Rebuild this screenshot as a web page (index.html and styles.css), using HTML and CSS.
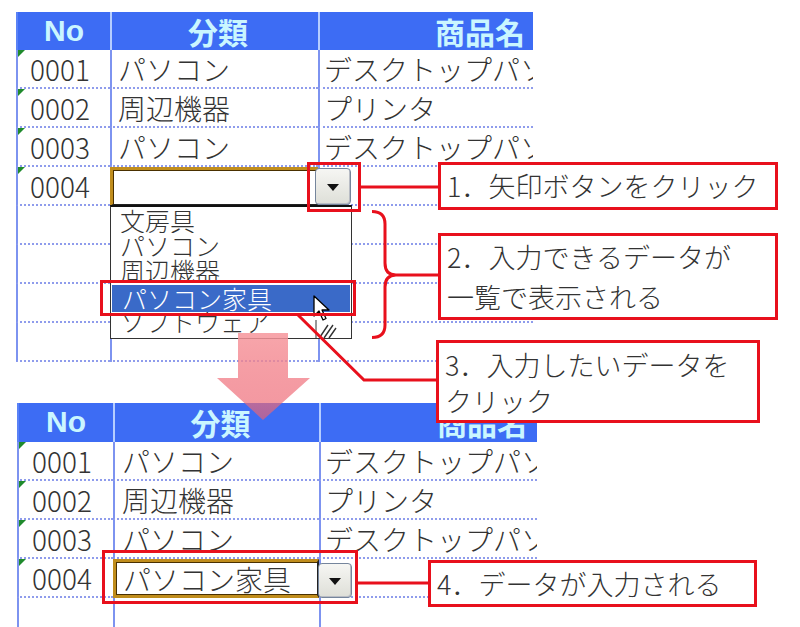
FILE: index.html
```html
<!DOCTYPE html>
<html lang="ja">
<head>
<meta charset="utf-8">
<link rel="stylesheet" href="styles.css">
</head>
<body>
<div class="canvas">
  <div class="sheet sheet-top">
    <div class="row head"><div class="c no">No</div><div class="c cat">分類</div><div class="c name">商品名</div></div>
    <div class="row"><div class="c no tri">0001</div><div class="c">パソコン</div><div class="c">デスクトップパソコン</div></div>
    <div class="row"><div class="c no tri">0002</div><div class="c">周辺機器</div><div class="c">プリンタ</div></div>
    <div class="row"><div class="c no tri">0003</div><div class="c">パソコン</div><div class="c">デスクトップパソコン</div></div>
    <div class="row"><div class="c no tri">0004</div><div class="c sel sel-open"></div><div class="c"></div></div>
    <div class="row"><div class="c no"></div><div class="c"></div><div class="c"></div></div>
    <div class="row"><div class="c no"></div><div class="c"></div><div class="c"></div></div>
    <div class="row"><div class="c no"></div><div class="c"></div><div class="c"></div></div>
    <div class="row"><div class="c no"></div><div class="c"></div><div class="c"></div></div>
  </div>

  <div class="sheet sheet-bottom">
    <div class="row head"><div class="c no">No</div><div class="c cat">分類</div><div class="c name">商品名</div></div>
    <div class="row"><div class="c no tri">0001</div><div class="c">パソコン</div><div class="c">デスクトップパソコン</div></div>
    <div class="row"><div class="c no tri">0002</div><div class="c">周辺機器</div><div class="c">プリンタ</div></div>
    <div class="row"><div class="c no tri">0003</div><div class="c">パソコン</div><div class="c">デスクトップパソコン</div></div>
    <div class="row"><div class="c no tri">0004</div><div class="c sel sel-done">パソコン家具</div><div class="c"></div></div>
    <div class="row last"><div class="c no"></div><div class="c"></div><div class="c"></div></div>
  </div>

  <div class="list">
    <div class="item">文房具</div>
    <div class="item">パソコン</div>
    <div class="item">周辺機器</div>
    <div class="item hl">パソコン家具</div>
    <div class="item cut">ソフトウェア</div>
  </div>

  <div class="ddbtn ddbtn-top"><span class="tri-down"></span></div>
  <div class="ddbtn ddbtn-bottom"><span class="tri-down"></span></div>

  <svg class="cursor" width="30" height="46" viewBox="0 0 30 46">
    <path d="M2 1 L2 21 L7 16 L11 25 L14 23.5 L10 15 L17 15 Z" fill="#fff" stroke="#000" stroke-width="1.3" stroke-linejoin="round"/>
    <path d="M4 44 L4 25" stroke="#333" stroke-width="1"/>
    <path d="M8 42 L16 30 M12 43 L21 30 M17 43 L24 33" stroke="#333" stroke-width="1.4"/>
  </svg>

  <svg class="marks" width="800" height="627" viewBox="0 0 800 627">
    <defs>
      <linearGradient id="pink" x1="0" y1="0" x2="0" y2="1">
        <stop offset="0" stop-color="rgb(246,150,156)" stop-opacity="0.85"/>
        <stop offset="1" stop-color="rgb(236,96,110)" stop-opacity="0.65"/>
      </linearGradient>
    </defs>
    <polygon points="238,333 288,333 288,378 310,378 263,420 217,378 238,378" fill="url(#pink)"/>
    <g fill="none" stroke="#e8101c" stroke-width="3">
      <rect x="308.5" y="163.5" width="51" height="47"/>
      <rect x="101.5" y="281.5" width="253" height="33"/>
      <rect x="103.5" y="551.5" width="253" height="51"/>
      <path d="M360 187 H438"/>
      <path d="M372 211.5 Q385 211.5 385 224 V263 Q385 275 396 275 Q385 275 385 287 V325 Q385 337.5 372 337.5"/>
      <path d="M396 275 H438"/>
      <path d="M297 314 L364 380 H436"/>
      <path d="M357 583 H428"/>
    </g>
  </svg>

  <div class="callout co1">1．矢印ボタンをクリック</div>
  <div class="callout co2">2．入力できるデータが<br>一覧で表示される</div>
  <div class="callout co3">3．入力したいデータを<br>クリック</div>
  <div class="callout co4">4．データが入力される</div>
</div>
</body>
</html>
```

FILE: styles.css
```css
html, body {
  margin: 0;
  padding: 0;
  background: #fff;
}

.canvas {
  position: relative;
  width: 800px;
  height: 627px;
  overflow: hidden;
  padding-top: 12px;
  box-sizing: border-box;
  font-family: "Noto Sans CJK JP", "Noto Sans", sans-serif;
  color: #333;
}

.sheet {
  display: flex;
  flex-direction: column;
}

.sheet-top {
  margin-left: 16px;
  width: 517px;
}

.sheet-bottom {
  margin-left: 17px;
  margin-top: 41px;
  width: 520px;
}

.row {
  display: grid;
  height: 39px;
}

.sheet-top .row {
  grid-template-columns: 94px 208px 215px;
}

.sheet-bottom .row {
  grid-template-columns: 96px 206px 218px;
}

.sheet-top .row.head {
  height: 38px;
}

.sheet-bottom .row.last {
  height: 40px;
}

.c {
  position: relative;
  box-sizing: border-box;
  border-left: 2px solid #7d93f0;
  border-bottom: 2px dotted #8f9cec;
  padding: 2px 0 0 4px;
  font-size: 28px;
  line-height: 35px;
  white-space: nowrap;
  overflow: hidden;
  font-weight: 300;
}

.sheet-top .c:nth-child(2) {
  padding-left: 6px;
}

.sheet-bottom .c:nth-child(2) {
  padding-left: 7px;
}

.c.no {
  padding-left: 12px;
}

.sheet-bottom .c.no {
  padding-left: 13px;
}

.row.last .c {
  border-bottom: none;
}

.c.tri::before {
  content: "";
  position: absolute;
  left: 0;
  top: 0;
  border-top: 7px solid #1f8a2c;
  border-right: 7px solid transparent;
}

.head .c {
  background: #3d6cf4;
  color: #caf6ff;
  font-weight: bold;
  font-size: 30px;
  line-height: 38px;
  padding: 0;
  overflow: visible;
  border-bottom: none;
  border-left: 2px solid #b5cdff;
  text-align: center;
  font-family: "Liberation Sans", "Noto Sans CJK JP", sans-serif;
}

.head .c.no {
  border-left-color: #5a82f6;
  padding: 0;
}

.head .c.cat,
.head .c.name {
  font-family: "Noto Sans CJK JP", sans-serif;
}

.head .c.name {
  text-align: right;
  padding-right: 10px;
}

.sheet-top .head .c.name {
  padding-right: 8px;
}

.c.sel {
  border-left: 3px solid #c08d1c;
  border-top: 3px solid #c08d1c;
  box-shadow: inset 1px 1px 0 #4a3000;
}

.c.sel-open {
  border-bottom: 2px solid #222;
}

.c.sel-done {
  border: 3px solid #c08d1c;
  border-right: 2px solid #222;
  box-shadow: inset 1px 1px 0 #4a3000, inset 0 -1px 0 #4a3000;
  padding-left: 4px;
  padding-top: 0;
  line-height: 34px;
}

.list {
  position: absolute;
  left: 110px;
  top: 205px;
  width: 242px;
  height: 134px;
  box-sizing: border-box;
  border: 1px solid #333;
  border-top: 2px solid #111;
  background: #fff;
  padding-top: 1px;
}

.item {
  height: 25px;
  line-height: 25px;
  font-size: 25px;
  padding-left: 9px;
  white-space: nowrap;
  overflow: hidden;
  font-weight: 300;
  color: #333;
}

.item.hl {
  height: 27px;
  line-height: 27px;
  margin: 2px 1px 0 1px;
  padding-left: 10px;
  background: #3a6ac8;
  color: #fff;
}

.item.cut {
  line-height: 19px;
  height: 24px;
}

.ddbtn {
  position: absolute;
  box-sizing: border-box;
  border: 1px solid #75859c;
  border-radius: 4px;
  background: linear-gradient(#f6f6f3, #dedfd8);
  display: flex;
  align-items: center;
  justify-content: center;
  box-shadow: inset -1px -1px 0 #b8bcc4;
}

.ddbtn-top {
  left: 315px;
  top: 168px;
  width: 36px;
  height: 37px;
}

.ddbtn-bottom {
  left: 318px;
  top: 563px;
  width: 34px;
  height: 35px;
}

.tri-down {
  width: 0;
  height: 0;
  border-left: 6px solid transparent;
  border-right: 6px solid transparent;
  border-top: 7px solid #111;
  margin-top: 2px;
}

.cursor {
  position: absolute;
  left: 312px;
  top: 295px;
}

.marks {
  position: absolute;
  left: 0;
  top: 0;
  pointer-events: none;
}

.callout {
  position: absolute;
  box-sizing: border-box;
  border: 3px solid #e8101c;
  background: #fff;
  font-size: 27px;
  font-weight: 300;
  color: #333;
  white-space: nowrap;
  padding-left: 6px;
}

.co1 {
  left: 438px;
  top: 162px;
  width: 340px;
  height: 48px;
  line-height: 42px;
}

.co2 {
  left: 438px;
  top: 233px;
  width: 340px;
  height: 87px;
  line-height: 40px;
  padding-top: 1px;
}

.co3 {
  left: 436px;
  top: 340px;
  width: 324px;
  height: 83px;
  line-height: 36px;
  padding-top: 4px;
}

.co4 {
  left: 428px;
  top: 560px;
  width: 329px;
  height: 47px;
  line-height: 41px;
}
```
